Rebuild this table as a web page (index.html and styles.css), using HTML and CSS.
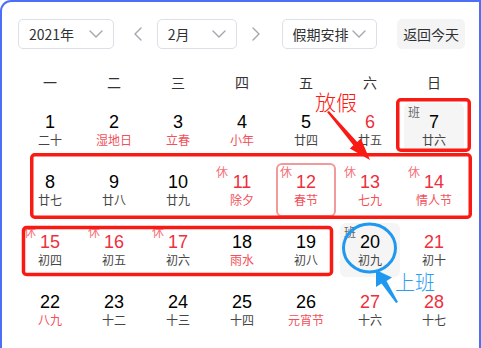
FILE: index.html
```html
<!DOCTYPE html>
<html lang="zh-CN">
<head>
<meta charset="utf-8">
<title>日历</title>
<link rel="stylesheet" href="styles.css">
</head>
<body>
<div class="frame">
  <div class="toolbar">
    <div class="select sel-year"><span>2021年</span><svg class="chev" width="14" height="8" viewBox="0 0 14 8"><path d="M1 1 L7 7 L13 1"/></svg></div>
    <button class="nav nav-prev"><svg width="9" height="14" viewBox="0 0 9 14"><path d="M8 1 L2 7 L8 13"/></svg></button>
    <div class="select sel-month"><span>2月</span><svg class="chev" width="14" height="8" viewBox="0 0 14 8"><path d="M1 1 L7 7 L13 1"/></svg></div>
    <button class="nav nav-next"><svg width="9" height="14" viewBox="0 0 9 14"><path d="M1 1 L7 7 L1 13"/></svg></button>
    <div class="select sel-holiday"><span>假期安排</span><svg class="chev" width="14" height="8" viewBox="0 0 14 8"><path d="M1 1 L7 7 L13 1"/></svg></div>
    <button class="today">返回今天</button>
  </div>
  <div class="weekdays">
    <span>一</span><span>二</span><span>三</span><span>四</span><span>五</span><span>六</span><span>日</span>
  </div>
  <div class="grid">
    <div class="cell"><span class="num">1</span><span class="lunar">二十</span></div>
    <div class="cell"><span class="num">2</span><span class="lunar fest">湿地日</span></div>
    <div class="cell"><span class="num">3</span><span class="lunar fest">立春</span></div>
    <div class="cell"><span class="num">4</span><span class="lunar fest">小年</span></div>
    <div class="cell"><span class="num">5</span><span class="lunar">廿四</span></div>
    <div class="cell red"><span class="num">6</span><span class="lunar">廿五</span></div>
    <div class="cell gray"><span class="tag work">班</span><span class="num">7</span><span class="lunar">廿六</span></div>

    <div class="cell"><span class="num">8</span><span class="lunar">廿七</span></div>
    <div class="cell"><span class="num">9</span><span class="lunar">廿八</span></div>
    <div class="cell"><span class="num">10</span><span class="lunar">廿九</span></div>
    <div class="cell red"><span class="tag rest">休</span><span class="num">11</span><span class="lunar fest">除夕</span></div>
    <div class="cell red outline"><span class="tag rest">休</span><span class="num">12</span><span class="lunar fest">春节</span></div>
    <div class="cell red"><span class="tag rest">休</span><span class="num">13</span><span class="lunar fest">七九</span></div>
    <div class="cell red"><span class="tag rest">休</span><span class="num">14</span><span class="lunar fest">情人节</span></div>

    <div class="cell red"><span class="tag rest">休</span><span class="num">15</span><span class="lunar">初四</span></div>
    <div class="cell red"><span class="tag rest">休</span><span class="num">16</span><span class="lunar">初五</span></div>
    <div class="cell red"><span class="tag rest">休</span><span class="num">17</span><span class="lunar">初六</span></div>
    <div class="cell"><span class="num">18</span><span class="lunar fest">雨水</span></div>
    <div class="cell"><span class="num">19</span><span class="lunar">初八</span></div>
    <div class="cell gray"><span class="tag work">班</span><span class="num">20</span><span class="lunar">初九</span></div>
    <div class="cell red"><span class="num">21</span><span class="lunar">初十</span></div>

    <div class="cell"><span class="num">22</span><span class="lunar fest">八九</span></div>
    <div class="cell"><span class="num">23</span><span class="lunar">十二</span></div>
    <div class="cell"><span class="num">24</span><span class="lunar">十三</span></div>
    <div class="cell"><span class="num">25</span><span class="lunar">十四</span></div>
    <div class="cell"><span class="num">26</span><span class="lunar fest">元宵节</span></div>
    <div class="cell red"><span class="num">27</span><span class="lunar">十六</span></div>
    <div class="cell red"><span class="num">28</span><span class="lunar">十七</span></div>
  </div>
</div>

<svg class="annot" width="481" height="348" viewBox="0 0 481 348">
  <g class="mark-red">
    <rect x="397.75" y="99.75" width="71.5" height="50.5" rx="3"/>
    <rect x="31.75" y="154.75" width="438.5" height="62.5" rx="3"/>
    <rect x="23.5" y="227.5" width="308" height="47" rx="3"/>
  </g>
  <polygon class="arrow-red" points="327,112 329,111 357.2,141.9 360.8,138.6 370,160 349.8,148.6 353.4,145.3"/>
  <text class="txt-red" x="315" y="110">放假</text>
  <ellipse class="mark-blue" cx="369.5" cy="248" rx="26" ry="24"/>
  <polygon class="arrow-blue" points="398,302 396,303 381.5,283.5 376,287 376,270 392,277.5 386.5,281"/>
  <text class="txt-blue" x="395" y="290">上班</text>
</svg>
</body>
</html>
```

FILE: styles.css
```css
* {
  box-sizing: border-box;
}

html,
body {
  margin: 0;
  padding: 0;
  background: #ffffff;
}

body {
  position: relative;
  width: 481px;
  height: 348px;
  overflow: hidden;
  font-family: "Liberation Sans", "Noto Sans CJK SC", sans-serif;
}

.frame {
  height: 348px;
  overflow: hidden;
  border: 2px solid #4f6ef6;
  border-bottom: none;
  border-radius: 11px 0 0 0;
  padding: 17px 14px 0 16px;
}

/* toolbar */
.toolbar {
  display: flex;
  align-items: center;
  height: 30px;
}

.select {
  height: 30px;
  border: 1px solid #dcdfe6;
  border-radius: 5px;
  display: flex;
  align-items: center;
  justify-content: space-between;
  padding: 0 10px 0 10px;
  font-family: "Noto Sans CJK SC", sans-serif;
  font-size: 14px;
  color: #303133;
}

.sel-year {
  width: 96px;
}

.sel-month {
  width: 80px;
}

.sel-holiday {
  width: 96px;
  padding-right: 10px;
}

.chev {
  display: block;
}

.chev path,
.nav path {
  fill: none;
  stroke: #a3a6ad;
  stroke-width: 1.4;
  stroke-linecap: round;
  stroke-linejoin: round;
}

.nav {
  width: 9px;
  height: 14px;
  padding: 0;
  border: none;
  background: none;
  display: flex;
}

.nav-prev {
  margin: 0 15px 0 19px;
}

.nav-next {
  margin: 0 21px 0 15px;
}

.today {
  margin-left: 20px;
  width: 68px;
  height: 30px;
  border: none;
  border-radius: 5px;
  background: #f4f4f5;
  padding: 0;
  font-family: "Noto Sans CJK SC", sans-serif;
  font-size: 14px;
  color: #303133;
}

/* weekdays */
.weekdays {
  display: grid;
  grid-template-columns: repeat(7, 60px);
  column-gap: 4px;
  padding: 0 2px;
  margin-top: 21px;
  height: 24px;
  line-height: 24px;
  text-align: center;
  font-family: "Noto Sans CJK SC", sans-serif;
  font-size: 14px;
  color: #333333;
}

/* grid */
.grid {
  display: grid;
  grid-template-columns: repeat(7, 60px);
  grid-auto-rows: 54px;
  gap: 6px 4px;
  padding: 0 2px;
  margin-top: 9px;
}

.cell {
  position: relative;
  display: flex;
  flex-direction: column;
  align-items: center;
  padding-top: 10px;
  border-radius: 6px;
}

.num {
  font-family: "Liberation Sans", sans-serif;
  font-size: 18px;
  line-height: 18px;
  color: #000000;
}

.lunar {
  margin-top: 1px;
  font-family: "Noto Sans CJK SC", sans-serif;
  font-size: 12px;
  line-height: 16px;
  color: #454545;
}

.lunar.fest {
  color: #f3505a;
}

.cell.red .num {
  color: #ee2f3c;
}

.cell.gray {
  background: #f5f5f5;
}

.cell.outline {
  box-shadow: inset 0 0 0 2px #f29a9a;
}

.tag {
  position: absolute;
  top: 3px;
  left: 4px;
  font-family: "Noto Sans CJK SC", sans-serif;
  font-size: 12px;
  line-height: 12px;
}

.tag.rest {
  color: #f4727a;
}

.tag.work {
  color: #666666;
}

/* annotation overlay */
.annot {
  position: absolute;
  left: 0;
  top: 0;
  pointer-events: none;
}

.mark-red rect {
  fill: none;
  stroke: #fa1a14;
  stroke-width: 3.5;
}

.arrow-red {
  fill: #fa1a14;
}

.txt-red {
  fill: #fa1a14;
  font-family: "Noto Sans CJK SC", sans-serif;
  font-weight: 300;
  font-size: 21px;
}

.mark-blue {
  fill: none;
  stroke: #1f98f0;
  stroke-width: 3;
}

.arrow-blue {
  fill: #1f98f0;
}

.txt-blue {
  fill: #2a9ff2;
  font-family: "Noto Sans CJK SC", sans-serif;
  font-weight: 300;
  font-size: 20px;
}
```
